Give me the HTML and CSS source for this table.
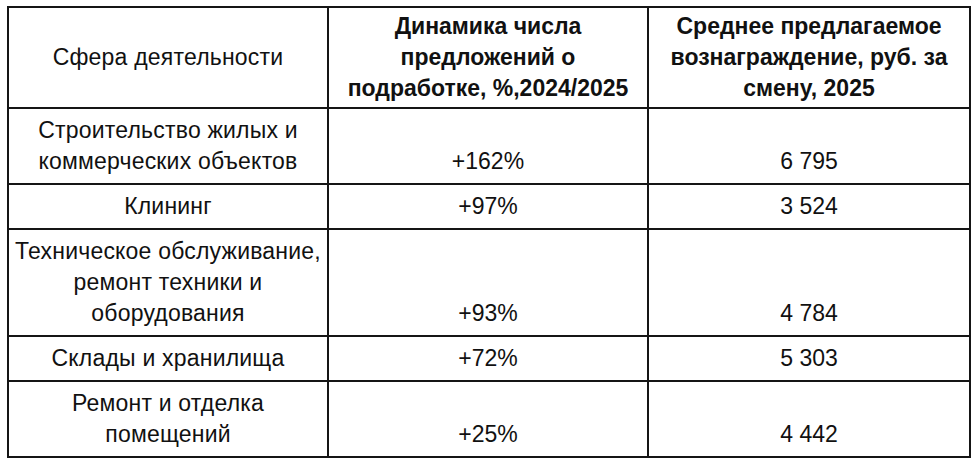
FILE: index.html
```html
<!DOCTYPE html>
<html lang="ru">
<head>
<meta charset="utf-8">
<link rel="stylesheet" href="styles.css">
</head>
<body>
<table class="grid">
  <colgroup>
    <col class="c1"><col class="c2"><col class="c3">
  </colgroup>
  <thead>
    <tr>
      <th class="lead">Сфера деятельности</th>
      <th class="bold">Динамика числа предложений о подработке, %,2024/2025</th>
      <th class="bold">Среднее предлагаемое вознаграждение, руб. за смену, 2025</th>
    </tr>
  </thead>
  <tbody>
    <tr>
      <td class="lead">Строительство жилых и коммерческих объектов</td>
      <td class="val">+162%</td>
      <td class="val">6 795</td>
    </tr>
    <tr>
      <td class="lead">Клининг</td>
      <td class="val">+97%</td>
      <td class="val">3 524</td>
    </tr>
    <tr>
      <td class="lead">Техническое обслуживание, ремонт техники и оборудования</td>
      <td class="val">+93%</td>
      <td class="val">4 784</td>
    </tr>
    <tr>
      <td class="lead">Склады и хранилища</td>
      <td class="val">+72%</td>
      <td class="val">5 303</td>
    </tr>
    <tr>
      <td class="lead">Ремонт и отделка помещений</td>
      <td class="val">+25%</td>
      <td class="val">4 442</td>
    </tr>
  </tbody>
</table>
</body>
</html>
```
FILE: styles.css
```css
html, body {
  background: #ffffff;
}
body {
  margin: 6px 0 0 7px;
  font-family: "Liberation Sans", Arial, sans-serif;
  font-size: 23px;
  line-height: 31px;
  color: #111111;
}
.grid {
  border-collapse: collapse;
  table-layout: fixed;
  width: 962px;
  border: 2px solid #151515;
}
.c1 { width: 320px; }
.c2 { width: 320px; }
.c3 { width: 322px; }
.grid th,
.grid td {
  border: 2px solid #151515;
  text-align: center;
  padding: 6px 4px;
}
.grid th {
  padding: 3px 4px;
  font-weight: normal;
}
.grid th.bold {
  font-weight: bold;
}
.lead {
  vertical-align: middle;
  letter-spacing: 0.2px;
}
.val {
  vertical-align: bottom;
}
```
